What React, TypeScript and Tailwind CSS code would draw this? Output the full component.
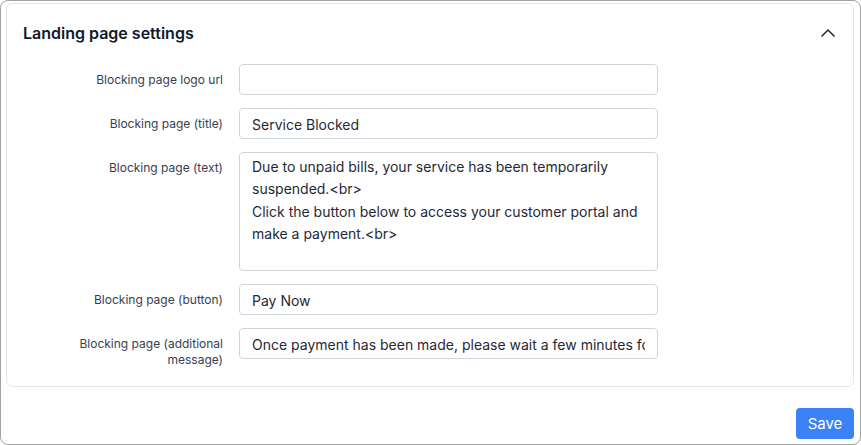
import React from 'react';

const fields = [
  { label: 'Blocking page logo url', value: '' },
  { label: 'Blocking page (title)', value: 'Service Blocked' },
  {
    label: 'Blocking page (text)',
    value:
      'Due to unpaid bills, your service has been temporarily suspended.<br>\nClick the button below to access your customer portal and make a payment.<br>',
    multiline: true,
  },
  { label: 'Blocking page (button)', value: 'Pay Now' },
  {
    label: 'Blocking page (additional message)',
    value: 'Once payment has been made, please wait a few minutes for your service to be restored.',
  },
];

export default function App() {
  return (
    <div
      className="h-[445px] w-[861px] overflow-hidden rounded-lg border border-[#a3a3a3] bg-white pl-[5px] pr-[6px] pt-[2px] text-[#1f2937]"
      style={{ fontFamily: 'Inter, "Noto Sans", sans-serif' }}
    >
      <div className="h-[384px] rounded-md border border-[#e5e7eb] px-4 pt-[17px]">
        <div className="flex items-center justify-between">
          <h2 className="text-base font-semibold leading-6 text-[#111827]">Landing page settings</h2>
          <svg width="16" height="10" viewBox="0 0 16 10" className="mr-[1px]" fill="none">
            <polyline points="1.5,8.5 8,2 14.5,8.5" stroke="#1f2937" strokeWidth="1.5" />
          </svg>
        </div>
        <div className="mt-[19px] flex flex-col gap-[13px]">
          {fields.map(({ label, value, multiline }) => (
            <div key={label} className="flex gap-4">
              <label className="ml-[31px] w-[169px] pt-[8px] text-right text-xs leading-4 text-[#374151]">
                {label}
              </label>
              {multiline ? (
                <textarea
                  defaultValue={value}
                  className="h-[119px] w-[419px] resize-none rounded border border-[#d1d5db] px-3 py-[3px] text-sm leading-[22.4px] text-[#1f2937] outline-none"
                />
              ) : (
                <input
                  defaultValue={value}
                  className="h-[31px] w-[419px] rounded border border-[#d1d5db] px-3 pt-[1px] text-sm text-[#1f2937] outline-none"
                />
              )}
            </div>
          ))}
        </div>
      </div>
      <div className="mt-[21px] flex justify-end">
        <button className="h-[31px] w-[58px] rounded bg-[#3b82f6] pt-[1px] text-[15px] text-white">Save</button>
      </div>
    </div>
  );
}
